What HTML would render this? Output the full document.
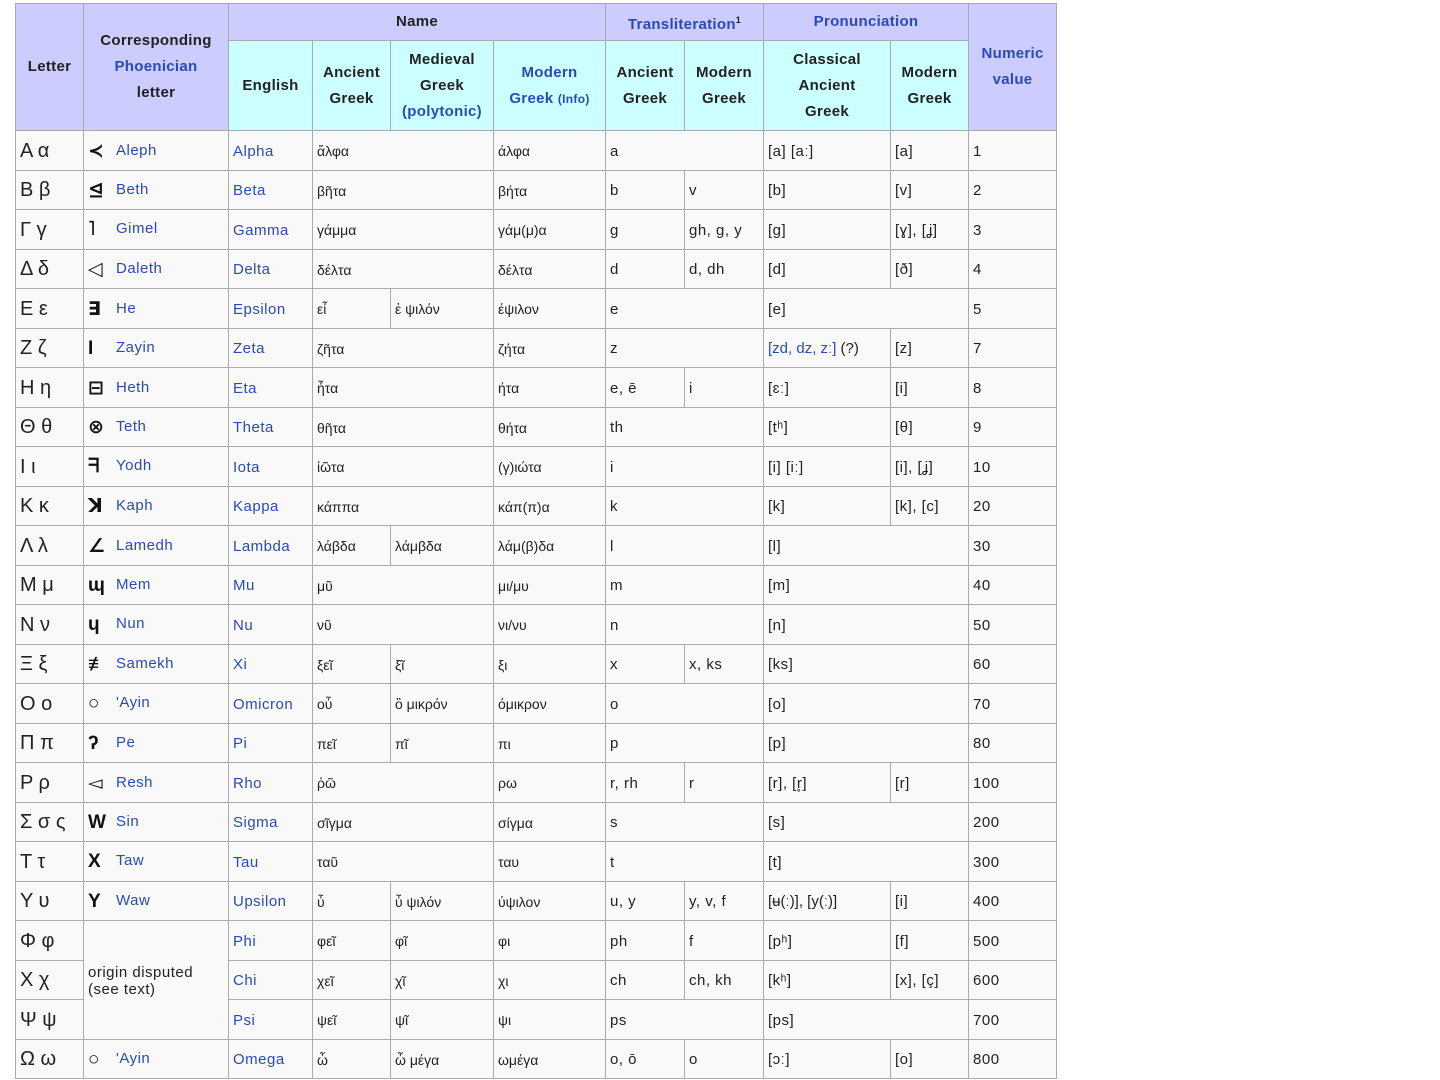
<!DOCTYPE html>
<html><head><meta charset="utf-8"><style>
body{margin:0;background:#fff;font-family:"Liberation Sans","DejaVu Sans",sans-serif;}
table{position:absolute;left:15px;top:3px;border-collapse:collapse;table-layout:fixed;width:1041px;font-size:15px;letter-spacing:.5px;color:#222;background:#f9f9f9}
td,th{border:1.5px solid #aaa;padding:0 4px;overflow:hidden;white-space:nowrap}
th{font-weight:bold;text-align:center;font-size:15px;letter-spacing:.3px;line-height:26px;color:#222}
th.p{background:#ccccff}
th.c{background:#ccffff}
.l{color:#2a4bb5}
tr.d{height:39.5px}
td{vertical-align:middle;padding-top:2px}
td.L{font-size:20px;letter-spacing:0}
td.g{font-size:14px;letter-spacing:0}
.ph{font-weight:bold;font-size:19px;display:inline-block;width:28px;color:#111;vertical-align:-2px}
sup{font-size:9px}
small{font-size:12px}
</style></head><body>
<table>
<colgroup><col style="width:68px"><col style="width:145px"><col style="width:84px"><col style="width:78px"><col style="width:103px"><col style="width:112px"><col style="width:79px"><col style="width:79px"><col style="width:127px"><col style="width:78px"><col style="width:88px"></colgroup>
<tr style="height:37px"><th class="p" rowspan="2">Letter</th><th class="p" rowspan="2">Corresponding<br><span class="l">Phoenician</span><br>letter</th><th class="p" colspan="4">Name</th><th class="p l" colspan="2">Transliteration<sup style="color:#222">1</sup></th><th class="p l" colspan="2">Pronunciation</th><th class="p l" rowspan="2">Numeric<br>value</th></tr>
<tr style="height:90px"><th class="c">English</th><th class="c">Ancient<br>Greek</th><th class="c">Medieval<br>Greek<br><span class="l">(polytonic)</span></th><th class="c"><span class="l">Modern<br>Greek</span> <small class="l">(Info)</small></th><th class="c">Ancient<br>Greek</th><th class="c">Modern<br>Greek</th><th class="c">Classical<br>Ancient<br>Greek</th><th class="c">Modern<br>Greek</th></tr>
<tr class="d"><td class="L">Α α</td><td><span class="ph">≺</span><span class="l">Aleph</span></td><td class="l">Alpha</td><td class="g" colspan="2">ἄλφα</td><td class="g">άλφα</td><td colspan="2">a</td><td>[a] [aː]</td><td>[a]</td><td>1</td></tr>
<tr class="d"><td class="L">Β β</td><td><span class="ph">⊴</span><span class="l">Beth</span></td><td class="l">Beta</td><td class="g" colspan="2">βῆτα</td><td class="g">βήτα</td><td>b</td><td>v</td><td>[b]</td><td>[v]</td><td>2</td></tr>
<tr class="d"><td class="L">Γ γ</td><td><span class="ph">˥</span><span class="l">Gimel</span></td><td class="l">Gamma</td><td class="g" colspan="2">γάμμα</td><td class="g">γάμ(μ)α</td><td>g</td><td>gh, g, y</td><td>[g]</td><td>[ɣ], [ʝ]</td><td>3</td></tr>
<tr class="d"><td class="L">Δ δ</td><td><span class="ph">◁</span><span class="l">Daleth</span></td><td class="l">Delta</td><td class="g" colspan="2">δέλτα</td><td class="g">δέλτα</td><td>d</td><td>d, dh</td><td>[d]</td><td>[ð]</td><td>4</td></tr>
<tr class="d"><td class="L">Ε ε</td><td><span class="ph">∃</span><span class="l">He</span></td><td class="l">Epsilon</td><td class="g">εἶ</td><td class="g">ἐ ψιλόν</td><td class="g">έψιλον</td><td colspan="2">e</td><td colspan="2">[e]</td><td>5</td></tr>
<tr class="d"><td class="L">Ζ ζ</td><td><span class="ph">I</span><span class="l">Zayin</span></td><td class="l">Zeta</td><td class="g" colspan="2">ζῆτα</td><td class="g">ζήτα</td><td colspan="2">z</td><td style="letter-spacing:0"><span class="l">[zd, dz, zː]</span> (?)</td><td>[z]</td><td>7</td></tr>
<tr class="d"><td class="L">Η η</td><td><span class="ph">⊟</span><span class="l">Heth</span></td><td class="l">Eta</td><td class="g" colspan="2">ἦτα</td><td class="g">ήτα</td><td>e, ē</td><td>i</td><td>[ɛː]</td><td>[i]</td><td>8</td></tr>
<tr class="d"><td class="L">Θ θ</td><td><span class="ph">⊗</span><span class="l">Teth</span></td><td class="l">Theta</td><td class="g" colspan="2">θῆτα</td><td class="g">θήτα</td><td colspan="2">th</td><td>[tʰ]</td><td>[θ]</td><td>9</td></tr>
<tr class="d"><td class="L">Ι ι</td><td><span class="ph">ᖷ</span><span class="l">Yodh</span></td><td class="l">Iota</td><td class="g" colspan="2">ἰῶτα</td><td class="g">(γ)ιώτα</td><td colspan="2">i</td><td>[i] [iː]</td><td>[i], [ʝ]</td><td>10</td></tr>
<tr class="d"><td class="L">Κ κ</td><td><span class="ph">ꓘ</span><span class="l">Kaph</span></td><td class="l">Kappa</td><td class="g" colspan="2">κάππα</td><td class="g">κάπ(π)α</td><td colspan="2">k</td><td>[k]</td><td>[k], [c]</td><td>20</td></tr>
<tr class="d"><td class="L">Λ λ</td><td><span class="ph">∠</span><span class="l">Lamedh</span></td><td class="l">Lambda</td><td class="g">λάβδα</td><td class="g">λάμβδα</td><td class="g">λάμ(β)δα</td><td colspan="2">l</td><td colspan="2">[l]</td><td>30</td></tr>
<tr class="d"><td class="L">Μ μ</td><td><span class="ph">ɰ</span><span class="l">Mem</span></td><td class="l">Mu</td><td class="g" colspan="2">μῦ</td><td class="g">μι/μυ</td><td colspan="2">m</td><td colspan="2">[m]</td><td>40</td></tr>
<tr class="d"><td class="L">Ν ν</td><td><span class="ph">ɥ</span><span class="l">Nun</span></td><td class="l">Nu</td><td class="g" colspan="2">νῦ</td><td class="g">νι/νυ</td><td colspan="2">n</td><td colspan="2">[n]</td><td>50</td></tr>
<tr class="d"><td class="L">Ξ ξ</td><td><span class="ph">≢</span><span class="l">Samekh</span></td><td class="l">Xi</td><td class="g">ξεῖ</td><td class="g">ξῖ</td><td class="g">ξι</td><td>x</td><td>x, ks</td><td colspan="2">[ks]</td><td>60</td></tr>
<tr class="d"><td class="L">Ο ο</td><td><span class="ph">○</span><span class="l">'Ayin</span></td><td class="l">Omicron</td><td class="g">οὖ</td><td class="g">ὂ μικρόν</td><td class="g">όμικρον</td><td colspan="2">o</td><td colspan="2">[o]</td><td>70</td></tr>
<tr class="d"><td class="L">Π π</td><td><span class="ph">ʔ</span><span class="l">Pe</span></td><td class="l">Pi</td><td class="g">πεῖ</td><td class="g">πῖ</td><td class="g">πι</td><td colspan="2">p</td><td colspan="2">[p]</td><td>80</td></tr>
<tr class="d"><td class="L">Ρ ρ</td><td><span class="ph">◅</span><span class="l">Resh</span></td><td class="l">Rho</td><td class="g" colspan="2">ῥῶ</td><td class="g">ρω</td><td>r, rh</td><td>r</td><td>[r], [r̥]</td><td>[r]</td><td>100</td></tr>
<tr class="d"><td class="L">Σ σ ς</td><td><span class="ph">W</span><span class="l">Sin</span></td><td class="l">Sigma</td><td class="g" colspan="2">σῖγμα</td><td class="g">σίγμα</td><td colspan="2">s</td><td colspan="2">[s]</td><td>200</td></tr>
<tr class="d"><td class="L">Τ τ</td><td><span class="ph">X</span><span class="l">Taw</span></td><td class="l">Tau</td><td class="g" colspan="2">ταῦ</td><td class="g">ταυ</td><td colspan="2">t</td><td colspan="2">[t]</td><td>300</td></tr>
<tr class="d"><td class="L">Υ υ</td><td><span class="ph">Y</span><span class="l">Waw</span></td><td class="l">Upsilon</td><td class="g">ὖ</td><td class="g">ὖ ψιλόν</td><td class="g">ύψιλον</td><td>u, y</td><td>y, v, f</td><td style="letter-spacing:0">[ʉ(ː)], [y(ː)]</td><td>[i]</td><td>400</td></tr>
<tr class="d"><td class="L">Φ φ</td><td rowspan="3">origin disputed<br>(see text)</td><td class="l">Phi</td><td class="g">φεῖ</td><td class="g">φῖ</td><td class="g">φι</td><td>ph</td><td>f</td><td>[pʰ]</td><td>[f]</td><td>500</td></tr>
<tr class="d"><td class="L">Χ χ</td><td class="l">Chi</td><td class="g">χεῖ</td><td class="g">χῖ</td><td class="g">χι</td><td>ch</td><td>ch, kh</td><td>[kʰ]</td><td>[x], [ç]</td><td>600</td></tr>
<tr class="d"><td class="L">Ψ ψ</td><td class="l">Psi</td><td class="g">ψεῖ</td><td class="g">ψῖ</td><td class="g">ψι</td><td colspan="2">ps</td><td colspan="2">[ps]</td><td>700</td></tr>
<tr class="d"><td class="L">Ω ω</td><td><span class="ph">○</span><span class="l">'Ayin</span></td><td class="l">Omega</td><td class="g">ὦ</td><td class="g">ὦ μέγα</td><td class="g">ωμέγα</td><td>o, ō</td><td>o</td><td>[ɔː]</td><td>[o]</td><td>800</td></tr>
</table>
</body></html>
